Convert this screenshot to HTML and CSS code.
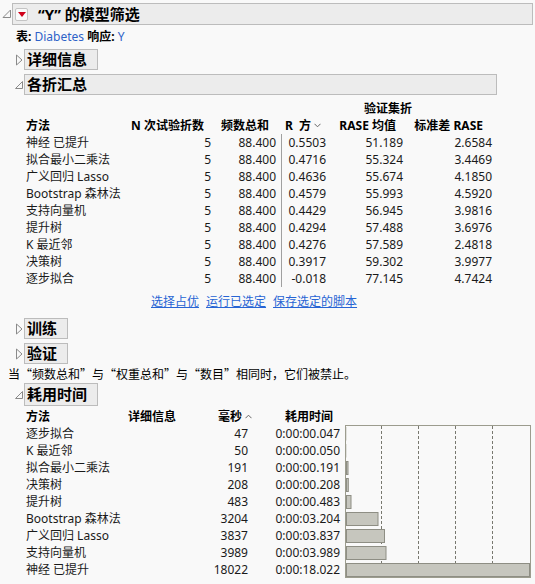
FILE: index.html
```html
<!DOCTYPE html>
<html>
<head>
<meta charset="utf-8">
<link rel="stylesheet" href="styles.css">
</head>
<body>
<div class="report">
  <div class="head">
    <span class="tog"><svg width="10" height="10" viewBox="0 0 10 10"><polygon points="1,8.5 8.5,8.5 8.5,1" fill="none" stroke="#8a8a8a"/></svg></span>
    <div class="hbox title">
      <span class="redbtn"><svg width="8" height="5" viewBox="0 0 8 5"><polygon points="0,0 8,0 4,5" fill="#d0021b"/></svg></span>
      <span>“Y” 的模型筛选</span>
    </div>
  </div>
  <div class="body">
    <div class="info"><b>表:</b> <span class="blue">Diabetes</span> <b>响应:</b> <span class="blue">Y</span></div>

    <div class="node">
      <div class="head">
        <span class="tog"><svg width="10" height="12" viewBox="0 0 10 12"><polygon points="2.5,1 8,6 2.5,11" fill="none" stroke="#8a8a8a"/></svg></span>
        <div class="hbox">详细信息</div>
      </div>
    </div>

    <div class="node">
      <div class="head">
        <span class="tog"><svg width="10" height="10" viewBox="0 0 10 10"><polygon points="1.5,8.5 8.5,8.5 8.5,1.5" fill="none" stroke="#8a8a8a"/></svg></span>
        <div class="hbox fold-box">各折汇总</div>
      </div>
      <div class="body fold-body">
        <div class="spanner">验证集折</div>
        <div class="fold-grid">
          <div class="hd">方法</div>
          <div class="hd num h2">N 次试验折数</div>
          <div class="hd num h3">频数总和</div>
          <div class="hd num h4">R&nbsp; 方<svg class="chev" width="7" height="5" viewBox="0 0 7 5"><polyline points="0.5,0.8 3.5,3.8 6.5,0.8" fill="none" stroke="#666"/></svg></div>
          <div class="hd num h5">RASE 均值</div>
          <div class="hd num h6">标准差 RASE</div>

          <div>神经 已提升</div><div class="num">5</div><div class="num c3">88.400</div><div class="num c4">0.5503</div><div class="num">51.189</div><div class="num">2.6584</div>
          <div>拟合最小二乘法</div><div class="num">5</div><div class="num c3">88.400</div><div class="num c4">0.4716</div><div class="num">55.324</div><div class="num">3.4469</div>
          <div>广义回归 Lasso</div><div class="num">5</div><div class="num c3">88.400</div><div class="num c4">0.4636</div><div class="num">55.674</div><div class="num">4.1850</div>
          <div>Bootstrap 森林法</div><div class="num">5</div><div class="num c3">88.400</div><div class="num c4">0.4579</div><div class="num">55.993</div><div class="num">4.5920</div>
          <div>支持向量机</div><div class="num">5</div><div class="num c3">88.400</div><div class="num c4">0.4429</div><div class="num">56.945</div><div class="num">3.9816</div>
          <div>提升树</div><div class="num">5</div><div class="num c3">88.400</div><div class="num c4">0.4294</div><div class="num">57.488</div><div class="num">3.6976</div>
          <div>K 最近邻</div><div class="num">5</div><div class="num c3">88.400</div><div class="num c4">0.4276</div><div class="num">57.589</div><div class="num">2.4818</div>
          <div>决策树</div><div class="num">5</div><div class="num c3">88.400</div><div class="num c4">0.3917</div><div class="num">59.302</div><div class="num">3.9977</div>
          <div>逐步拟合</div><div class="num">5</div><div class="num c3">88.400</div><div class="num c4">-0.018</div><div class="num">77.145</div><div class="num">4.7424</div>
        </div>
        <div class="links"><a href="#">选择占优</a><a href="#">运行已选定</a><a href="#">保存选定的脚本</a></div>
      </div>
    </div>

    <div class="node train">
      <div class="head">
        <span class="tog"><svg width="10" height="12" viewBox="0 0 10 12"><polygon points="2.5,1 8,6 2.5,11" fill="none" stroke="#8a8a8a"/></svg></span>
        <div class="hbox">训练</div>
      </div>
    </div>

    <div class="node">
      <div class="head">
        <span class="tog"><svg width="10" height="12" viewBox="0 0 10 12"><polygon points="2.5,1 8,6 2.5,11" fill="none" stroke="#8a8a8a"/></svg></span>
        <div class="hbox">验证</div>
      </div>
    </div>

    <div class="note">当“频数总和”与“权重总和”与“数目”相同时，它们被禁止。</div>

    <div class="node time-node">
      <div class="head">
        <span class="tog"><svg width="10" height="10" viewBox="0 0 10 10"><polygon points="1.5,8.5 8.5,8.5 8.5,1.5" fill="none" stroke="#8a8a8a"/></svg></span>
        <div class="hbox time-box">耗用时间</div>
      </div>
      <div class="body time-body">
        <div class="time-grid">
          <div class="hd">方法</div>
          <div class="hd">详细信息</div>
          <div class="hd num">毫秒<svg class="chev" width="7" height="5" viewBox="0 0 7 5"><polyline points="0.5,4.2 3.5,1.2 6.5,4.2" fill="none" stroke="#666"/></svg></div>
          <div class="hd num th4">耗用时间</div>
          <div></div>

          <div class="chart">
            <svg width="186" height="153" viewBox="0 0 186 153">
              <rect x="0.5" y="0.5" width="185" height="152" fill="none" stroke="#9c9c8e"/>
              <g stroke="#78786f" stroke-dasharray="3,2">
                <line x1="36.5" y1="1" x2="36.5" y2="152"/>
                <line x1="73.5" y1="1" x2="73.5" y2="152"/>
                <line x1="110.5" y1="1" x2="110.5" y2="152"/>
                <line x1="147.5" y1="1" x2="147.5" y2="152"/>
              </g>
              <g fill="#c6c6be" stroke="#8e8e84">
                <rect x="1" y="2" width="0.5" height="13.5" stroke="none"/>
                <rect x="1" y="19" width="0.5" height="13.5" stroke="none"/>
                <rect x="1.5" y="36.5" width="1.5" height="13" />
                <rect x="1.5" y="53.5" width="1.8" height="13" />
                <rect x="1.5" y="70.5" width="4.5" height="13" />
                <rect x="1.5" y="87.5" width="31.5" height="13" />
                <rect x="1.5" y="104.5" width="38" height="13" />
                <rect x="1.5" y="121.5" width="39.5" height="13" />
                <rect x="1.5" y="138.5" width="183" height="13" />
              </g>
            </svg>
          </div>

          <div>逐步拟合</div><div></div><div class="num ms">47</div><div class="num">0:00:00.047</div>
          <div>K 最近邻</div><div></div><div class="num ms">50</div><div class="num">0:00:00.050</div>
          <div>拟合最小二乘法</div><div></div><div class="num ms">191</div><div class="num">0:00:00.191</div>
          <div>决策树</div><div></div><div class="num ms">208</div><div class="num">0:00:00.208</div>
          <div>提升树</div><div></div><div class="num ms">483</div><div class="num">0:00:00.483</div>
          <div>Bootstrap 森林法</div><div></div><div class="num ms">3204</div><div class="num">0:00:03.204</div>
          <div>广义回归 Lasso</div><div></div><div class="num ms">3837</div><div class="num">0:00:03.837</div>
          <div>支持向量机</div><div></div><div class="num ms">3989</div><div class="num">0:00:03.989</div>
          <div>神经 已提升</div><div></div><div class="num ms">18022</div><div class="num">0:00:18.022</div>
        </div>
      </div>
    </div>
  </div>
</div>
</body>
</html>
```

FILE: styles.css
```css
* { box-sizing: border-box; }
body {
  margin: 0;
  background: #f9f9f9;
  font-family: "Noto Sans", "Noto Sans CJK SC", sans-serif;
  font-size: 12px;
  color: #1a1a1a;
}
.report { padding: 3px 2px 0 2px; }
.head { display: flex; align-items: center; }
.tog {
  width: 10px;
  flex: none;
  display: flex;
  align-items: center;
}
.tog svg { display: block; }
.hbox {
  background: #ececec;
  border: 1px solid #bcbcbc;
  font-weight: bold;
  font-size: 15px;
  color: #000;
  height: 21px;
  display: flex;
  align-items: center;
  padding: 0 10px 0 2px;
  line-height: 1;
}
.title {
  flex: 1;
  height: 22px;
  padding-left: 2px;
}
.redbtn {
  width: 13px;
  height: 13px;
  border: 1px solid #c4c4c4;
  border-radius: 2px;
  background: #fafafa;
  display: flex;
  align-items: center;
  justify-content: center;
  margin-right: 10px;
}
.redbtn svg { display: block; }
.body { padding-left: 12px; }
.info {
  margin: 3px 0 2px 2px;
  line-height: 17px;
}
.info b { font-weight: bold; color: #000; }
.blue { color: #2e62c8; }
.node { margin-top: 4px; }
.fold-box { width: 473px; }
.fold-body { padding-top: 5px; padding-bottom: 5px; }
.spanner {
  padding-left: 338px;
  font-weight: bold;
  line-height: 17px;
  color: #000;
}
.fold-grid {
  display: grid;
  grid-template-columns: 99px 86px 70px 45px 77px 89px;
  grid-auto-rows: 17px;
  line-height: 17px;
  white-space: nowrap;
}
.hd { font-weight: bold; color: #000; }
.num { text-align: right; }
.h2 { padding-right: 7px; }
.h3 { padding-right: 12px; }
.h4 { padding-right: 5px; }
.h5 { padding-right: 7px; }
.h6 { padding-right: 9px; }
.c3 { padding-right: 5px; }
.c4 { border-left: 1px solid #a0a0a0; }
.chev { margin-left: 3px; vertical-align: 2px; }
.links {
  margin-top: 6px;
  line-height: 17px;
  padding-left: 125px;
}
.links a {
  color: #2764d4;
  text-decoration: underline;
  margin-right: 7px;
}
.train { margin-top: 3px; }
.note {
  margin: 1px 0 0 -6px;
  line-height: 17px;
  font-family: "Noto Sans CJK SC", sans-serif;
  color: #000;
}
.time-node { margin-top: 1px; }
.time-box { height: 23px; }
.time-body { padding-top: 2px; }
.time-grid {
  display: grid;
  grid-template-columns: 102px 72px 52px 88px 191px;
  grid-auto-rows: 17px;
  line-height: 17px;
  white-space: nowrap;
}
.ms { padding-right: 4px; }
.th4 { padding-right: 7px; }
.chart {
  grid-column: 5;
  grid-row: 2 / span 9;
  padding-left: 5px;
}
.chart svg { display: block; }
```
